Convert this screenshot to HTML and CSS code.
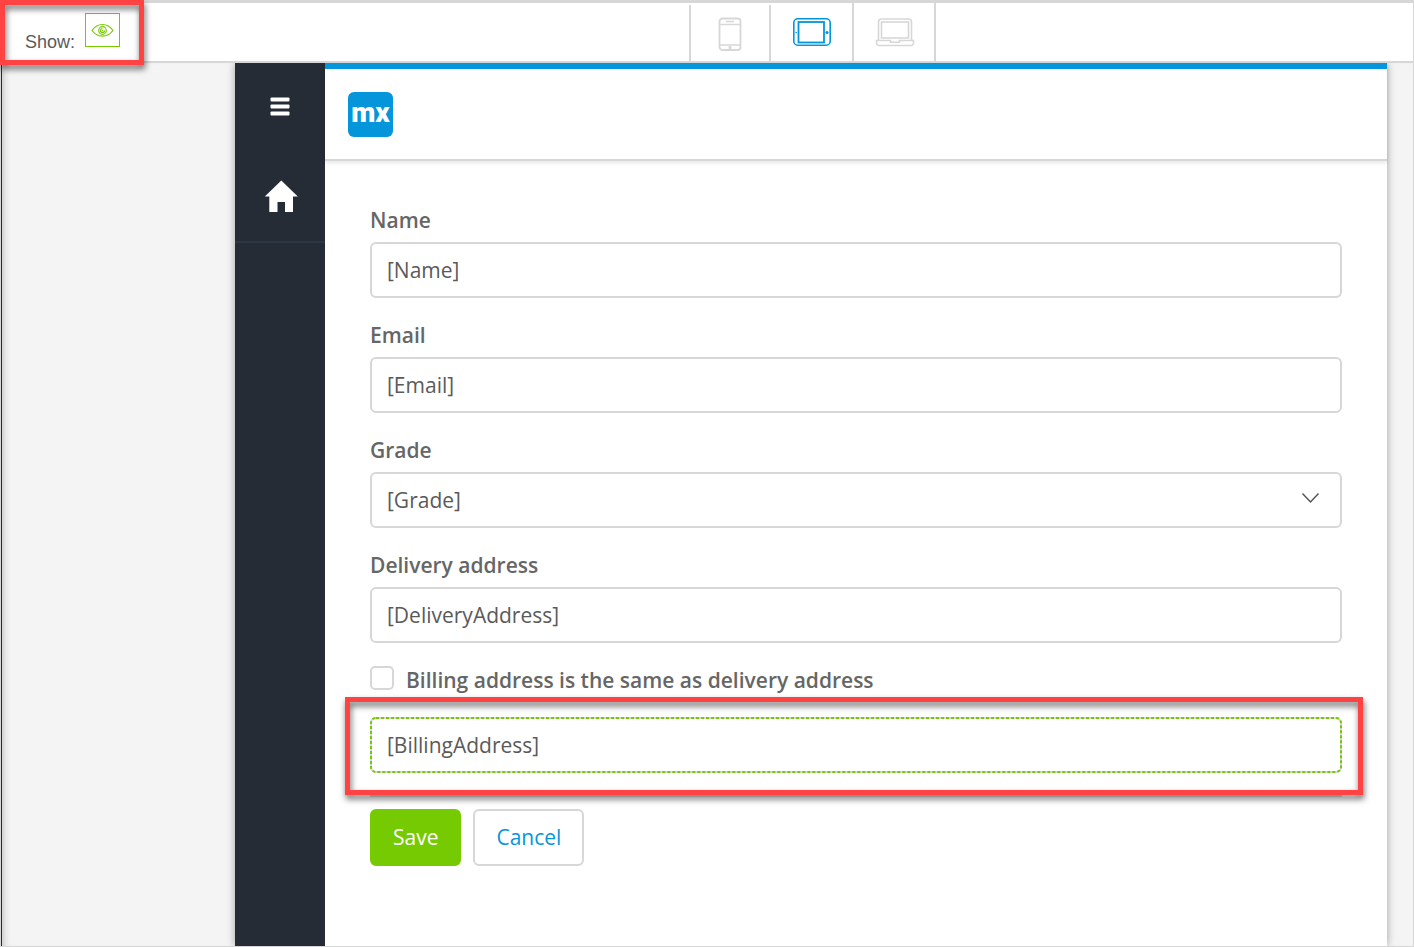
FILE: index.html
```html
<!DOCTYPE html>
<html lang="en">
<head>
<meta charset="utf-8">
<meta name="viewport" content="width=device-width, initial-scale=1">
<title>Page editor</title>
<link rel="stylesheet" href="styles.css">
</head>
<body>
<header class="toolbar">
  <div class="show callout-host">
    <span class="show-label" id="show-label">Show:</span>
    <button class="eye" type="button" aria-labelledby="show-label">
      <svg width="24" height="16" viewBox="0 0 24 16" fill="none" stroke="#76ca02" stroke-width="1.2"><path d="M1 8.500C6.500 .5 16.500 .5 22 8.500C16.500 16 6.500 16 1 8.500Z"/><circle cx="11.500" cy="8.500" r="3.800"/><path d="M11.500 6.500a2 2 0 1 0 2 2M11 8.500h1"/></svg>
    </button>
    <div class="callout callout-show"></div>
  </div>
  <nav class="devices" aria-label="Device">
    <button class="device phone" type="button" aria-label="Phone">
      <svg width="26" height="34" viewBox="0 0 26 34" fill="none" stroke="#d7d7d7" stroke-width="1.800"><rect x="2.500" y="1.500" width="21" height="31.500" rx="3"/><path d="M2.500 7.500h21M2.500 28h21M9 4.500h8" stroke-width="1.500"/><path d="M13 29v3M11.500 30.500h3" stroke-width="1.800"/></svg>
    </button>
    <button class="device tablet" type="button" aria-label="Tablet" aria-pressed="true">
      <svg width="40" height="30" viewBox="0 0 40 30" fill="none" stroke="#0595db"><rect x="1.800" y="1.800" width="36.400" height="26.400" rx="4" stroke-width="1.600"/><rect x="6.500" y="5" width="25.500" height="20.500" stroke-width="1.800"/><circle cx="35" cy="15.500" r="1.600" fill="#0595db" stroke="none"/><circle cx="4.200" cy="15.500" r=".8" fill="#0595db" stroke="none"/></svg>
    </button>
    <button class="device laptop" type="button" aria-label="Laptop">
      <svg width="40" height="30" viewBox="0 0 40 30" fill="none" stroke="#d7d7d7" stroke-width="1.600"><path d="M3.500 23.500V5a3 3 0 0 1 3-3h27a3 3 0 0 1 3 3v18.500"/><rect x="6.500" y="5" width="27" height="16"/><path d="M1.500 23.500h14v1.800h9v-1.800H38.500v2.500a2.500 2.500 0 0 1-2.500 2.500H4A2.500 2.500 0 0 1 1.500 26Z"/></svg>
    </button>
  </nav>
</header>
<div class="stage">
  <div class="frame">
    <aside class="sidebar">
      <button class="side-item" type="button" aria-label="Menu">
        <svg width="20" height="20" viewBox="0 0 20 20" fill="#fff"><rect x="0.500" y="0.500" width="19" height="4" rx="1"/><rect x="0.500" y="7.500" width="19" height="4" rx="1"/><rect x="0.500" y="14.500" width="19" height="4" rx="1"/></svg>
      </button>
      <a class="side-item side-home" href="#" aria-label="Home">
        <svg width="34" height="32" viewBox="0 0 34 32" fill="#fff"><path d="M17.300 .5L33.800 16.500H29V32H21V22H13.500V32H5.300V16.500H.8Z"/></svg>
      </a>
    </aside>
    <div class="page">
      <div class="topbar">
        <div class="logo">mx</div>
      </div>
      <form class="form">
        <div class="field"><label for="name">Name</label><input class="control" id="name" type="text" value="[Name]"></div>
        <div class="field"><label for="email">Email</label><input class="control" id="email" type="text" value="[Email]"></div>
        <div class="field"><label for="grade">Grade</label>
          <div class="select-wrap"><select class="control" id="grade"><option>[Grade]</option></select>
            <svg class="chevron" width="18" height="12" viewBox="0 0 18 12" fill="none" stroke="#555" stroke-width="1.500"><path d="M.5 1.500L8.500 10L16.500 1.500"/></svg></div>
        </div>
        <div class="field"><label for="delivery">Delivery address</label><input class="control" id="delivery" type="text" value="[DeliveryAddress]"></div>
        <div class="check"><input id="same" type="checkbox"><label for="same">Billing address is the same as delivery address</label></div>
        <div class="billing callout-host">
          <input class="control" type="text" value="[BillingAddress]" aria-label="Billing address">
          <svg class="dashes" aria-hidden="true"><rect x="1" y="1" rx="5"/></svg>
          <div class="callout callout-billing"></div>
        </div>
        <div class="actions"><button class="btn save" type="button">Save</button><button class="btn cancel" type="button">Cancel</button></div>
      </form>
    </div>
  </div>
</div>
</body>
</html>
```

FILE: styles.css
```css
* { box-sizing: border-box; }
body {
  margin: 0;
  min-height: 100vh;
  display: flex;
  flex-direction: column;
  background: #f4f4f4;
  color: #5a5a5a;
  font-family: "Open Sans", sans-serif;
}
button { font: inherit; cursor: pointer; }
.toolbar {
  display: flex;
  height: 63px;
  padding-right: 24px;
  background: #fff;
  border-top: 3px solid #d7d7d7;
  border-bottom: 2px solid #d7d7d7;
  border-right: 1px solid #d7d7d7;
}
.callout-host { position: relative; }
.show {
  display: flex;
  align-items: flex-start;
  gap: 10px;
  width: 235px;
  padding: 10px 0 0 25px;
}
.show-label {
  padding-top: 18px;
  font: 18px/22px "Liberation Sans", sans-serif;
}
.eye {
  display: grid;
  place-items: center;
  width: 35px;
  height: 34px;
  padding: 0;
  background: #fff;
  border: 1px solid #76ca02;
}
.callout {
  position: absolute;
  border: 5px solid #ff4343;
  filter: drop-shadow(1px 4px 3px rgba(0, 0, 0, .6));
  pointer-events: none;
  z-index: 2;
}
.callout-show { left: 0; top: -3px; width: 144px; height: 65px; }
.callout-billing { inset: -20px -21px -22px -25px; }
.devices {
  flex: 1;
  display: flex;
  justify-content: center;
}
.device {
  display: grid;
  justify-items: center;
  align-content: start;
  padding: 14px 0 0;
  background: none;
  border: 0 solid #d7d7d7;
  border-left-width: 2px;
}
.phone, .tablet { margin-top: 2px; padding-top: 12px; }
.phone { width: 80px; }
.tablet { width: 83px; padding-left: 2px; }
.laptop { width: 84px; padding-left: 2px; border-right-width: 2px; }
.stage {
  flex: 1;
  display: flex;
  padding: 0 26px 0 234px;
  border-left: 1px solid #d7d7d7;
  border-right: 1px solid #d7d7d7;
  border-bottom: 1px solid #d7d7d7;
  box-shadow: inset 1px 0 #103246, inset 3px 0 #d7d7d7, inset 8px 0 6px -4px rgba(0, 0, 0, .14);
  overflow: hidden;
}
.frame {
  flex: 1;
  display: flex;
  background: #fff;
  box-shadow: 0 0 8px rgba(0, 0, 0, .35);
}
.sidebar {
  width: 90px;
  background: #252c36;
}
.side-item {
  display: grid;
  place-items: center;
  width: 100%;
  height: 88px;
  padding: 0;
  background: none;
  border: 0;
}
.side-home {
  height: 92px;
  padding: 0 0 0 2px;
  border-bottom: 2px solid #2e3744;
}
.page {
  flex: 1;
  min-width: 0;
}
.topbar {
  height: 98px;
  padding: 23px;
  background: #fff;
  border-top: 6px solid #0595db;
  border-bottom: 2px solid #d7d7d7;
  box-shadow: 0 2px 4px rgba(0, 0, 0, .1);
}
.logo {
  width: 45px;
  height: 45px;
  border-radius: 6px;
  background: #0595db;
  color: #fff;
  font: 900 28px/42px Roboto, sans-serif;
  text-align: center;
}
.form {
  padding: 44px 45px 40px;
  font-size: 21px;
}
.field { margin-bottom: 22px; }
.field label {
  display: block;
  height: 37px;
  line-height: 30px;
}
label {
  color: #666;
  font-weight: 600;
}
.control {
  display: block;
  width: 100%;
  height: 56px;
  padding: 0 15px;
  font: inherit;
  color: #5a5a5a;
  background: #fff;
  border: 2px solid #d7d7d7;
  border-radius: 6px;
  appearance: none;
}
.select-wrap { position: relative; }
.chevron {
  position: absolute;
  right: 22px;
  top: 20px;
  pointer-events: none;
}
.check {
  display: flex;
  align-items: center;
  gap: 12px;
  height: 30px;
  margin-bottom: 22px;
}
.check input {
  width: 24px;
  height: 24px;
  margin: 0 0 4px;
  border: 2px solid #d7d7d7;
  border-radius: 5px;
  appearance: none;
}
.billing {
  margin-bottom: 22px;
}
.dashes {
  position: absolute;
  inset: 0;
  width: 100%;
  height: 100%;
  pointer-events: none;
}
.dashes rect {
  width: calc(100% - 2px);
  height: calc(100% - 2px);
  fill: none;
  stroke: #76ca02;
  stroke-width: 2px;
  stroke-dasharray: 3 2;
}
.actions {
  display: flex;
  gap: 12px;
  padding-top: 12px;
  border-top: 2px solid #d7d7d7;
}
.btn {
  height: 57px;
  padding: 0 21px 2px;
  border: 2px solid #76ca02;
  border-radius: 6px;
}
.save { background: #76ca02; color: #fff; }
.cancel { background: #fff; color: #0595db; border-color: #d7d7d7; }
```
